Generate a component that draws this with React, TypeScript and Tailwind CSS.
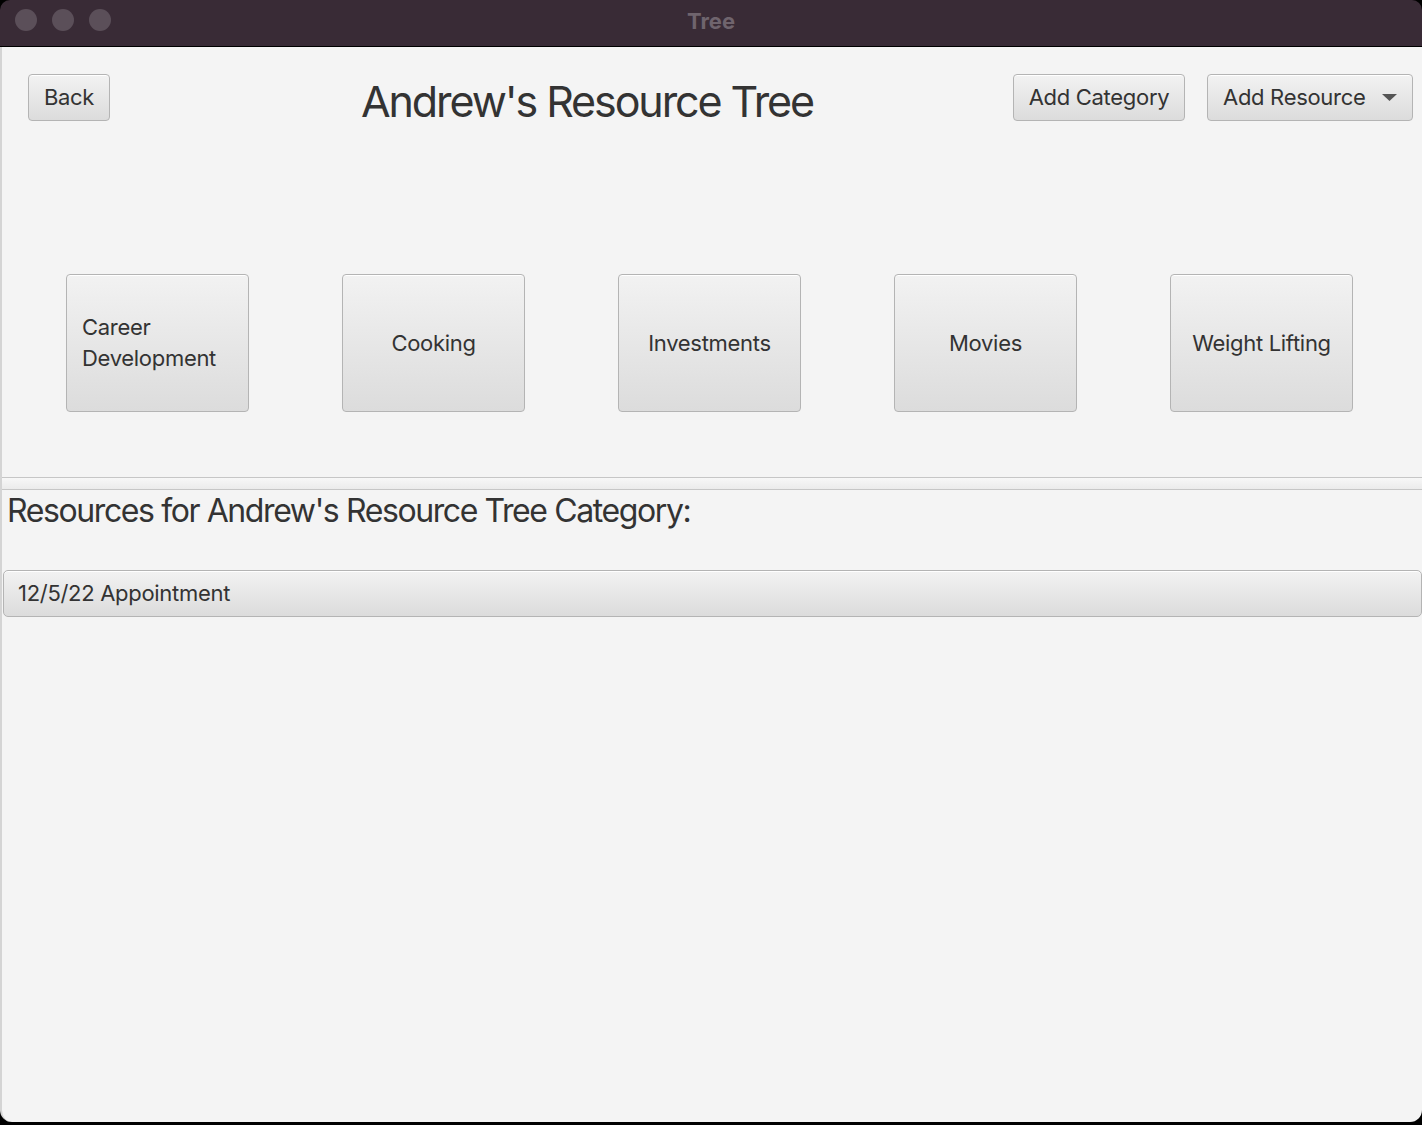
import React from "react";

const btn =
  "border border-[#b4b4b4] rounded-[4px] bg-gradient-to-b from-[#f2f2f2] to-[#dcdcdc] shadow-[inset_0_1px_0_#ffffff] text-[#333333] tracking-[-0.3px]";

const categories = [
  "Career Development",
  "Cooking",
  "Investments",
  "Movies",
  "Weight Lifting",
];

export default function App() {
  return (
    <div
      className="w-[1422px] h-[1125px] bg-black flex flex-col overflow-hidden"
      style={{ fontFamily: "Inter, 'Liberation Sans', sans-serif" }}
    >
      {/* title bar */}
      <div className="h-[47px] shrink-0 bg-[#392b36] border-b border-black rounded-t-[10px] relative flex items-center">
        <div className="flex gap-[15px] pl-[15px] pb-[6px]">
          <span className="w-[22px] h-[22px] rounded-full bg-[#5b4f59]" />
          <span className="w-[22px] h-[22px] rounded-full bg-[#5b4f59]" />
          <span className="w-[22px] h-[22px] rounded-full bg-[#5b4f59]" />
        </div>
        <div className="absolute left-0 right-0 top-[5px] text-center text-[22px] font-bold text-[#6f646d]">
          Tree
        </div>
      </div>

      {/* content */}
      <div className="flex-1 bg-[#f4f4f4] rounded-b-[12px] border-l-2 border-[#d4d4d4] mb-[3px] flex flex-col">
        {/* header */}
        <div className="flex items-start pt-[27px] h-[227px]">
          <button className={`${btn} ml-[26px] w-[82px] h-[47px] text-[22px]`}>Back</button>
          <div className="ml-[251px] mt-[1px] text-[43px] leading-[52px] text-[#333333] tracking-[-2.1px]">
            Andrew's Resource Tree
          </div>
          <div className="flex-1" />
          <button className={`${btn} w-[172px] h-[47px] text-[22px]`}>Add Category</button>
          <button
            className={`${btn} ml-[22px] mr-[9px] w-[206px] h-[47px] text-[22px] flex items-center pl-[15px]`}
          >
            <span>Add Resource</span>
            <svg width="15" height="7" viewBox="0 0 15 7" className="ml-[16px]">
              <path d="M0 0 H15 L7.5 7 Z" fill="#555555" />
            </svg>
          </button>
        </div>

        {/* categories */}
        <div className="flex gap-[93px] pl-[64px]">
          {categories.map((c, i) => (
            <button
              key={c}
              className={`${btn} w-[183px] h-[138px] text-[22px] leading-[31px] ${
                i === 0 ? "text-left px-[15px]" : "text-center"
              }`}
            >
              {c}
            </button>
          ))}
        </div>

        {/* divider */}
        <div className="mt-[65px] h-[13px] border-t border-b border-[#c6c6c6] bg-gradient-to-b from-[#f7f7f7] to-[#ebebeb]" />

        {/* resources */}
        <div className="pl-[5px] pt-[2px] text-[32px] leading-[38px] text-[#333333] tracking-[-1.4px]">
          Resources for Andrew's Resource Tree Category:
        </div>
        <div className="mt-[40px] pl-[1px]">
          <button
            className={`${btn} w-full h-[47px] text-[22px] text-left pl-[14px] rounded-[5px]`}
          >
            12/5/22 Appointment
          </button>
        </div>
      </div>
    </div>
  );
}
